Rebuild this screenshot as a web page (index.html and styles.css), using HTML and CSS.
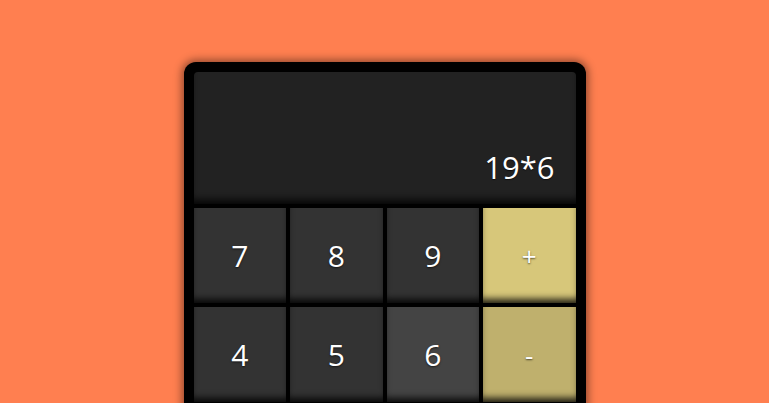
FILE: index.html
```html
<!DOCTYPE html>
<html>
<head>
<meta charset="utf-8">
<link rel="stylesheet" href="styles.css">
</head>
<body>
<div class="calc">
  <div class="display"><span class="expr">19*6</span></div>
  <button class="key">7</button>
  <button class="key">8</button>
  <button class="key">9</button>
  <button class="key op">+</button>
  <button class="key">4</button>
  <button class="key">5</button>
  <button class="key active">6</button>
  <button class="key op op-dim">-</button>
</div>
</body>
</html>
```
FILE: styles.css
```css
html, body {
  margin: 0;
  padding: 0;
  height: 100%;
  overflow: hidden;
}
body {
  background: #ff7f50;
  font-family: "Open Sans", "DejaVu Sans", sans-serif;
  display: flex;
  justify-content: center;
  align-items: flex-start;
}
.calc {
  margin-top: 62px;
  width: 382px;
  padding: 10px 10px 40px;
  background: #000;
  border-radius: 12px;
  box-shadow: 0 0 8px 2px rgba(0,0,0,0.45);
  display: grid;
  grid-template-columns: repeat(4, 1fr);
  grid-template-rows: 132px;
  grid-auto-rows: 95px;
  gap: 4px;
}
.display {
  grid-column: 1 / 5;
  background: #222;
  border-radius: 4px 4px 0 0;
  box-shadow: inset 0 -8px 8px -4px rgba(0,0,0,0.9);
  display: flex;
  justify-content: flex-end;
  align-items: flex-end;
  padding: 0 21px 21px 0;
  box-sizing: border-box;
}
.expr {
  color: #fff;
  font-size: 31px;
  font-weight: 400;
  line-height: 1;
  text-shadow: 0 1px 1px rgba(0,0,0,0.6);
}
.key {
  border: 0;
  margin: 0;
  padding: 0;
  background: #333;
  color: #fff;
  font-family: inherit;
  font-size: 30px;
  font-weight: 400;
  box-shadow: inset 0 -7px 7px -3px rgba(0,0,0,0.85);
  text-shadow: 0 1px 2px rgba(0,0,0,0.6);
}
.key.active {
  background: #444;
}
.key.op {
  background: #d7c77a;
  font-size: 26px;
}
.key.op-dim {
  background: #bfb06d;
}
```
